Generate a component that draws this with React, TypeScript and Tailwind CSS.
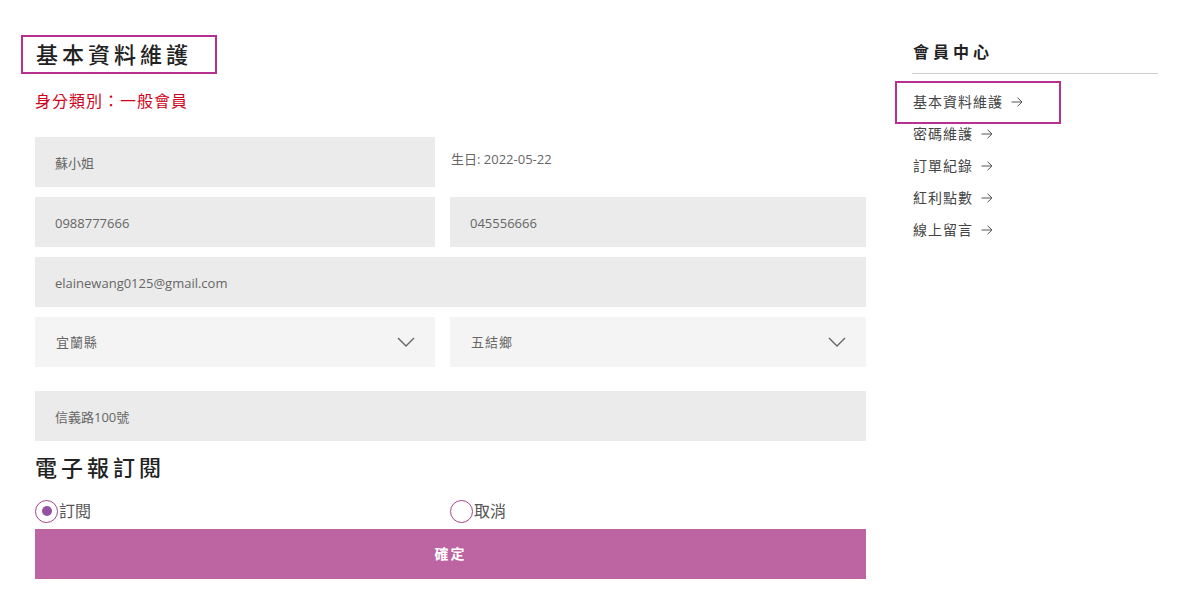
import React from "react";

const font = {
  fontFamily: '"Open Sans", "Noto Sans CJK TC", sans-serif',
};

function Chevron() {
  return (
    <svg width="18" height="10" viewBox="0 0 18 10" fill="none" className="shrink-0">
      <path d="M1 1 L9 9 L17 1" stroke="#666" strokeWidth="1.4" />
    </svg>
  );
}

function Field({ value, wide = false }: { value: string; wide?: boolean }) {
  return (
    <div
      className={`flex h-[50px] items-center bg-[#ebebeb] pl-[20px] pt-[3px] text-[13px] text-[#666] ${
        wide ? "col-span-2" : ""
      }`}
    >
      {value}
    </div>
  );
}

function Select({ value }: { value: string }) {
  return (
    <div className="flex h-[50px] items-center justify-between bg-[#f4f4f4] pl-[21px] pr-[20px] text-[13px] tracking-[1px] text-[#666]">
      <span className="pt-[2px]">{value}</span>
      <Chevron />
    </div>
  );
}

function Radio({ checked, label }: { checked: boolean; label: string }) {
  return (
    <label className="flex items-center">
      <span className="flex h-[23px] w-[23px] items-center justify-center rounded-full border-[1.5px] border-[#a4468f]">
        {checked && <span className="h-[10px] w-[10px] rounded-full bg-[#93539e]" />}
      </span>
      <span className="ml-[1px] text-[16px] leading-[24px] text-[#555]">{label}</span>
    </label>
  );
}

const navItems = ["基本資料維護", "密碼維護", "訂單紀錄", "紅利點數", "線上留言"];

export default function App() {
  return (
    <div style={font} className="flex min-h-[592px] w-[1200px] bg-white">
      {/* form column */}
      <div className="w-[866px] pl-[35px] pt-[35px]">
        <div className="-ml-[14px] inline-block border-2 border-[#b5308f] pl-[13px] pr-[23px]">
          <h1 className="text-[22px] font-medium leading-[35px] tracking-[4px] text-[#222]">
            基本資料維護
          </h1>
        </div>
        <p className="mt-[15px] text-[16px] leading-[24px] tracking-[1px] text-[#d0021b]">
          身分類別：一般會員
        </p>

        <div className="mt-[24px] grid grid-cols-[400px_416px] gap-x-[15px] gap-y-[10px]">
          <Field value="蘇小姐" />
          <div className="pl-[1px] pt-[12px] text-[13px] leading-[20px] text-[#666]">
            生日: 2022-05-22
          </div>
          <Field value="0988777666" />
          <Field value="045556666" />
          <Field value="elainewang0125@gmail.com" wide />
          <Select value="宜蘭縣" />
          <Select value="五結鄉" />
          <div className="col-span-2 mt-[14px]">
            <Field value="信義路100號" />
          </div>
        </div>

        <h2 className="mt-[11px] text-[22px] font-medium leading-[30px] tracking-[4px] text-[#222]">
          電子報訂閱
        </h2>

        <div className="mt-[17px] grid grid-cols-[400px_416px] gap-x-[15px]">
          <Radio checked label="訂閱" />
          <Radio checked={false} label="取消" />
        </div>

        <button className="mt-[6px] flex h-[50px] w-[831px] items-center justify-center bg-[#bd64a2] pb-[2px] text-[14px] font-bold tracking-[2px] text-white">
          確定
        </button>
      </div>

      {/* member sidebar */}
      <aside className="ml-[46px] w-[246px] pt-[38px]">
        <div className="border-b border-[#cccccc] pb-[7px] pl-[1px]">
          <h3 className="text-[16px] font-bold leading-[28px] tracking-[4px] text-[#222]">
            會員中心
          </h3>
        </div>
        <ul className="mt-[12px] pl-[1px]">
          {navItems.map((item, i) => (
            <li key={item} className="relative flex items-center text-[14px] leading-[32px] text-[#444]">
              {i === 0 && (
                <span className="pointer-events-none absolute -left-[18px] -top-[5px] h-[43px] w-[166px] border-2 border-[#b5308f]" />
              )}
              <span className="tracking-[1px]">{item}</span>
              <svg width="12" height="10" viewBox="0 0 12 10" fill="none" className="ml-[8px]">
                <path d="M0.5 5 H11 M6.5 0.7 L11 5 L6.5 9.3" stroke="#555" strokeWidth="1" />
              </svg>
            </li>
          ))}
        </ul>
      </aside>
    </div>
  );
}
